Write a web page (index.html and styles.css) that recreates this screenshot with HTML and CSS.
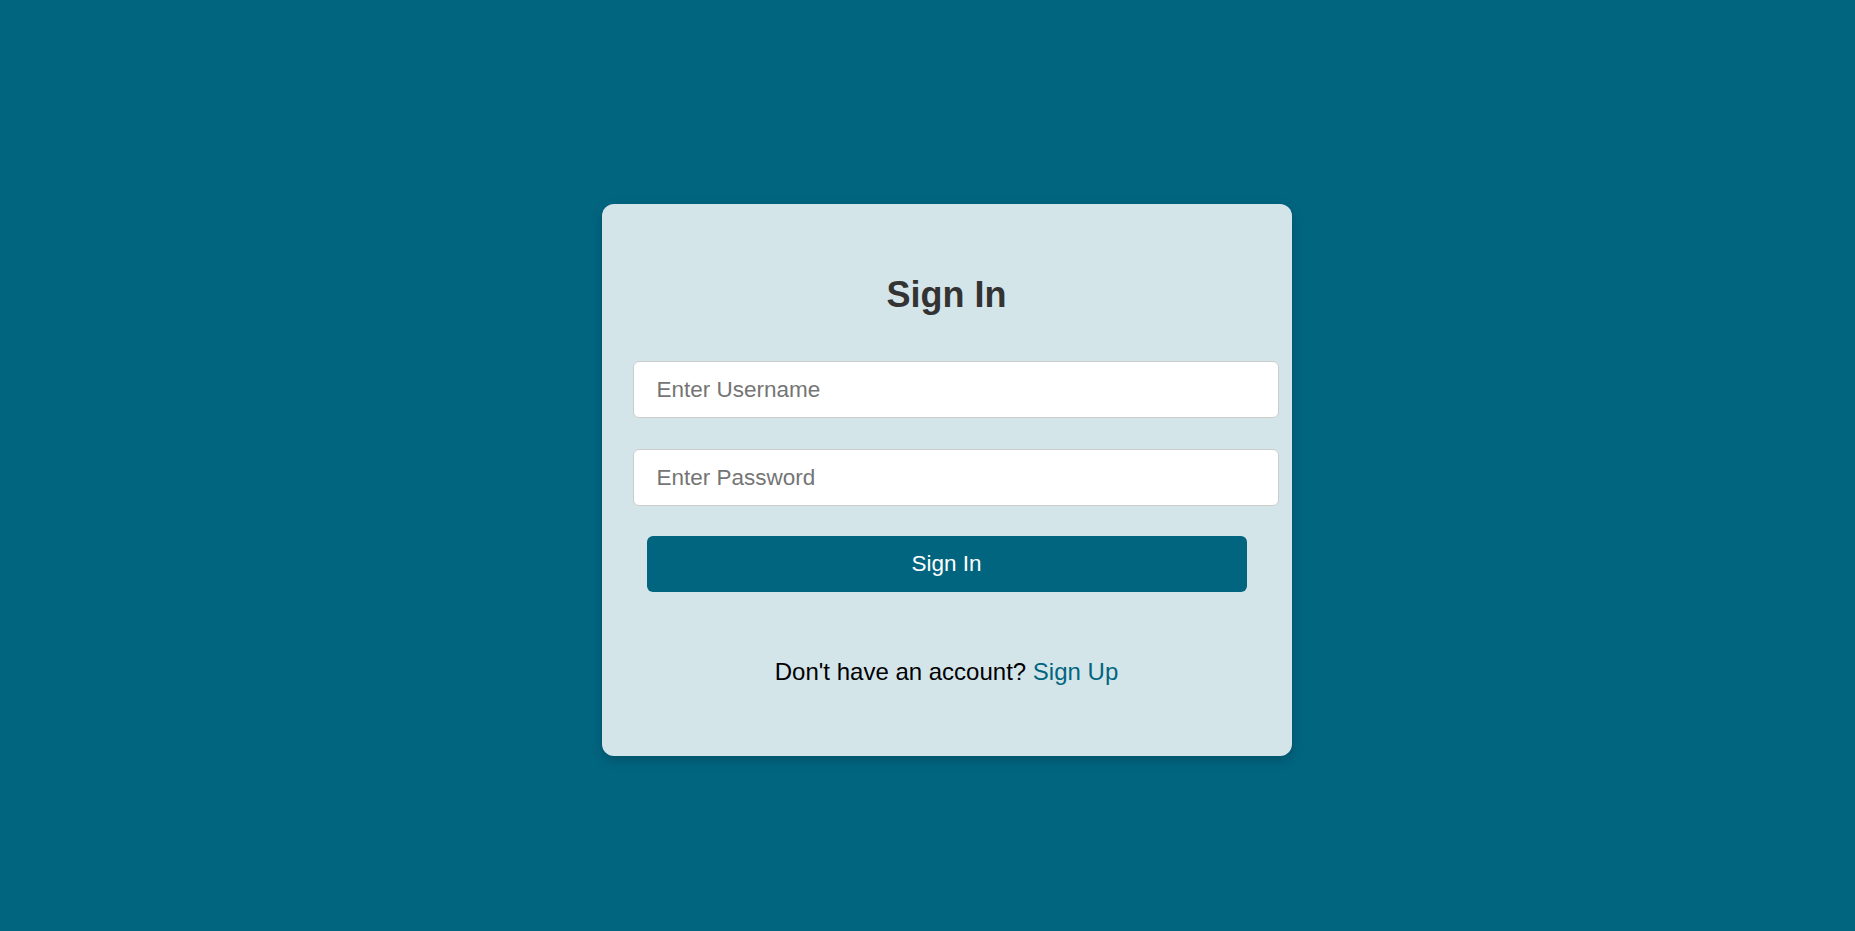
FILE: index.html
```html
<!DOCTYPE html>
<html lang="en">
<head>
  <meta charset="UTF-8" />
  <meta name="viewport" content="width=device-width, initial-scale=1.0" />
  <title>Sign In</title>
  <link rel="stylesheet" href="styles.css">
</head>
<body>
  <div class="card">
    <h2 class="title">Sign In</h2>
    <form class="form" id="signInForm">
      <input type="text" class="field" id="username" name="username" placeholder="Enter Username" />
      <input type="password" class="field" id="password" name="password" placeholder="Enter Password" />
      <button type="submit" class="btn">Sign In</button>
    </form>
    <p class="footer">Don't have an account? <a href="#" class="link">Sign Up</a></p>
  </div>
</body>
</html>
```

FILE: styles.css
```css
html, body {
  margin: 0;
  height: 100%;
}
body {
  font-family: "Liberation Sans", Arial, sans-serif;
  background: #026580;
  display: flex;
  justify-content: center;
  align-items: center;
  padding: 29px 0 0 38px;
  box-sizing: border-box;
}
.card {
  width: 690px;
  height: 552px;
  box-sizing: border-box;
  padding-top: 70px;
  background: #d4e5ea;
  border-radius: 12px;
  box-shadow: 0 4px 12px rgba(0, 0, 0, 0.2);
}
.title {
  margin: 0;
  font-size: 36px;
  line-height: 42px;
  font-weight: bold;
  text-align: center;
  color: #333;
}
.form {
  display: flex;
  flex-direction: column;
  margin-top: 45px;
}
.field {
  margin-left: 31px;
  width: 646px;
  height: 57px;
  box-sizing: border-box;
  padding: 0 23px;
  border: 1px solid #ccc;
  border-radius: 6px;
  background: #fff;
  font-family: inherit;
  font-size: 22.5px;
  color: #333;
  outline: none;
}
.field::placeholder {
  color: #757575;
}
.field + .field {
  margin-top: 31px;
}
.btn {
  align-self: center;
  width: 600px;
  height: 56px;
  margin-top: 30px;
  border: none;
  border-radius: 6px;
  background: #026580;
  color: #fff;
  font-family: inherit;
  font-size: 22.5px;
  cursor: pointer;
}
.footer {
  margin: 66px 0 0;
  font-size: 24px;
  line-height: 28px;
  text-align: center;
  color: #000;
}
.link {
  color: #026580;
  text-decoration: none;
}
```
